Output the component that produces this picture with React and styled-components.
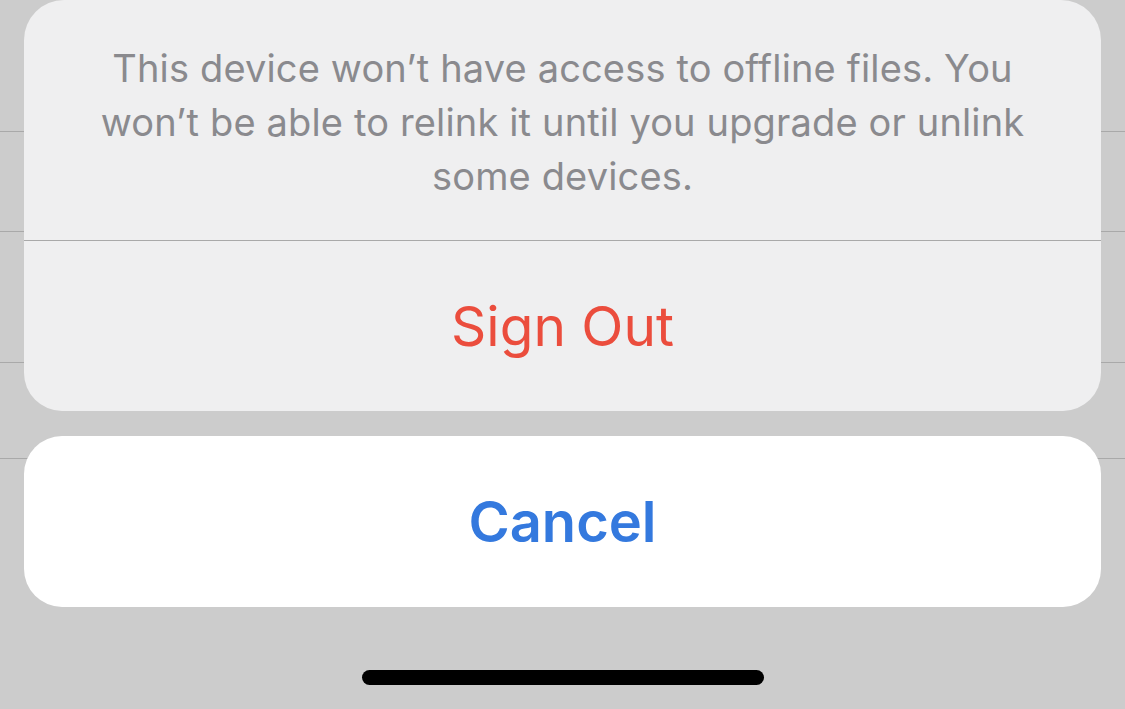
import React from 'react';
import styled, { createGlobalStyle } from 'styled-components';

const GlobalStyle = createGlobalStyle`
  html, body {
    margin: 0;
    padding: 0;
    background: #cccccc;
  }
  body {
    font-family: Inter, "Noto Sans", "Liberation Sans", sans-serif;
    -webkit-font-smoothing: antialiased;
  }
`;

const Screen = styled.div`
  position: relative;
  width: 1125px;
  height: 709px;
  overflow: hidden;
  background: #cccccc;
`;

const List = styled.div`
  display: flex;
  flex-direction: column;
`;

const ListRow = styled.div`
  height: ${(p) => p.h}px;
  border-bottom: 1px solid #a9a9a9;
`;

const Sheet = styled.div`
  position: absolute;
  inset: 0;
  display: flex;
  flex-direction: column;
  align-items: center;
  padding: 0 24px;
`;

const Group = styled.div`
  width: 100%;
  display: flex;
  flex-direction: column;
  background: #efeff0;
  border-radius: 0 0 38px 38px;
  border-top-left-radius: 40px;
  border-top-right-radius: 40px;
  overflow: hidden;
`;

const Message = styled.p`
  margin: 0;
  height: 241px;
  box-sizing: border-box;
  padding: 41px 66px 0;
  text-align: center;
  font-size: 38px;
  line-height: 54px;
  letter-spacing: 0.15px;
  color: #8a8a8e;
  border-bottom: 1px solid #a9a9a9;
`;

const ActionButton = styled.button`
  display: flex;
  align-items: center;
  justify-content: center;
  width: 100%;
  height: ${(p) => p.h}px;
  border: none;
  padding: 0;
  background: ${(p) => p.bg || 'transparent'};
  border-radius: ${(p) => (p.rounded ? '38px' : '0')};
  color: ${(p) => p.color};
  font-family: Inter, "Noto Sans", "Liberation Sans", sans-serif;
  font-size: ${(p) => p.size}px;
  font-weight: ${(p) => p.weight};
  cursor: pointer;
`;

const CancelWrap = styled.div`
  width: 100%;
  margin-top: 25px;
`;

const HomeBar = styled.div`
  width: 402px;
  height: 15px;
  border-radius: 8px;
  background: #000;
  margin-top: 63px;
`;

export default function App() {
  return (
    <Screen>
      <GlobalStyle />
      <List>
        <ListRow h={131} />
        <ListRow h={99} />
        <ListRow h={130} />
        <ListRow h={95} />
      </List>
      <Sheet>
        <Group>
          <Message>
            This device won’t have access to offline files. You won’t be able to relink it until you upgrade or unlink some devices.
          </Message>
          <ActionButton h={170} color="#eb4d3d" size={55} weight={400}>
            Sign Out
          </ActionButton>
        </Group>
        <CancelWrap>
          <ActionButton h={171} bg="#ffffff" rounded color="#3479de" size={56} weight={600}>
            Cancel
          </ActionButton>
        </CancelWrap>
        <HomeBar />
      </Sheet>
    </Screen>
  );
}
